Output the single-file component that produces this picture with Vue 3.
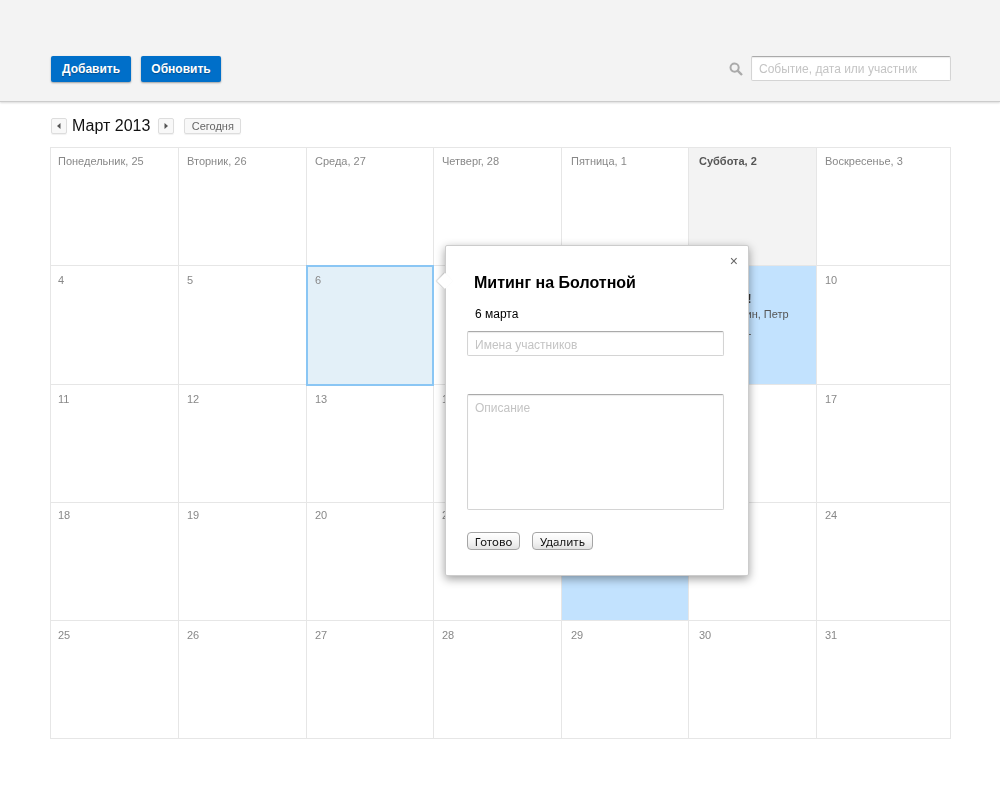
<script setup>
const cells = [
  { label: "Понедельник, 25" },
  { label: "Вторник, 26" },
  { label: "Среда, 27" },
  { label: "Четверг, 28" },
  { label: "Пятница, 1" },
  { label: "Суббота, 2", today: true },
  { label: "Воскресенье, 3" },
  { label: "4" },
  { label: "5" },
  { label: "6", selected: true },
  {},
  {},
  { busy: true, title: "Встреча!", people: "Иван Лукин, Петр", extra: "Анна, Ян -" },
  { label: "10" },
  { label: "11" },
  { label: "12" },
  { label: "13" },
  { label: "14" },
  {},
  {},
  { label: "17" },
  { label: "18" },
  { label: "19" },
  { label: "20" },
  { label: "21" },
  { busy: true },
  {},
  { label: "24" },
  { label: "25" },
  { label: "26" },
  { label: "27" },
  { label: "28" },
  { label: "29" },
  { label: "30" },
  { label: "31" },
];
</script>

<template>
  <div class="page">
    <header class="topbar">
      <div class="actions">
        <button class="primary">Добавить</button>
        <button class="primary">Обновить</button>
      </div>
      <div class="search">
        <svg class="search-icon" width="14" height="14" viewBox="0 0 14 14">
          <circle cx="5.6" cy="5.6" r="4.1" fill="none" stroke="#aaa" stroke-width="2" />
          <path d="M8.6 8.6L13 13" stroke="#aaa" stroke-width="2.4" />
        </svg>
        <input class="field search-field" placeholder="Событие, дата или участник" />
      </div>
    </header>

    <div class="nav">
      <button class="small arrow">
        <svg width="4" height="6" viewBox="0 0 4 6"><path d="M3.5 0v6L0 3z" fill="#555" /></svg>
      </button>
      <span class="month">Март 2013</span>
      <button class="small arrow">
        <svg width="4" height="6" viewBox="0 0 4 6"><path d="M.5 0v6L4 3z" fill="#555" /></svg>
      </button>
      <button class="small today-btn">Сегодня</button>
    </div>

    <div class="wrap">
      <div class="grid">
        <div
          v-for="(cell, i) in cells"
          :key="i"
          :class="['cell', { today: cell.today, selected: cell.selected, busy: cell.busy }]"
        >
          <span class="label">{{ cell.label }}</span>
          <template v-if="cell.title">
            <strong class="event-title">{{ cell.title }}</strong>
            <span class="event-text">{{ cell.people }}</span>
            <span class="event-text">{{ cell.extra }}</span>
          </template>
        </div>
      </div>

      <div class="popup">
        <span class="pointer"></span>
        <span class="close">×</span>
        <h2>Митинг на Болотной</h2>
        <p class="date">6 марта</p>
        <input class="field names" placeholder="Имена участников" />
        <textarea class="field description" placeholder="Описание"></textarea>
        <div class="popup-actions">
          <button class="plain done">Готово</button>
          <button class="plain remove">Удалить</button>
        </div>
      </div>
    </div>
  </div>
</template>

<style scoped>
.page {
  font-family: "Liberation Sans", Arial, sans-serif;
  height: 803px;
  overflow: hidden;
  background: #fff;
}

.topbar {
  box-sizing: border-box;
  height: 102px;
  padding: 56px 49px 0 51px;
  display: flex;
  justify-content: space-between;
  align-items: flex-start;
  background: #f3f3f3;
  border-bottom: 1px solid #ccc;
  box-shadow: 0 1px 2px rgba(0, 0, 0, 0.15);
}

.actions {
  display: flex;
  gap: 10px;
}

.primary {
  width: 80px;
  height: 26px;
  padding: 0;
  border: none;
  border-radius: 2px;
  background: #006fc9;
  color: #fff;
  font: bold 12px "Liberation Sans", Arial, sans-serif;
  box-shadow: 0 1px 2px rgba(0, 0, 0, 0.35);
  text-shadow: 0 1px 1px rgba(0, 0, 0, 0.3);
}

.search {
  display: flex;
  align-items: center;
  gap: 8px;
  will-change: transform;
}

.search-icon {
  margin-top: 1px;
}

.field {
  box-sizing: border-box;
  display: block;
  margin: 0;
  padding: 0 7px;
  border: 1px solid #d4d4d4;
  border-top-color: #aaa;
  border-radius: 2px;
  background: #fff;
  outline: none;
  color: #333;
  box-shadow: inset 0 1px 1px rgba(0, 0, 0, 0.08);
  font: 12px "Liberation Sans", Arial, sans-serif;
}

.field::placeholder {
  color: #c4c4c4;
  opacity: 1;
}

.search-field {
  width: 200px;
  height: 25px;
}

.nav {
  display: flex;
  align-items: center;
  height: 16px;
  margin: 16px 0 13px 51px;
  will-change: transform;
}

.small {
  box-sizing: border-box;
  height: 16px;
  padding: 0;
  border: 1px solid #ddd;
  border-radius: 2px;
  background: #f8f8f8;
  color: #666;
  font: 11px "Liberation Sans", Arial, sans-serif;
  box-shadow: 0 1px 1px rgba(0, 0, 0, 0.06);
}

.arrow {
  width: 16px;
  display: flex;
  align-items: center;
  justify-content: center;
}

.month {
  margin: 0 8px 0 5px;
  font-size: 16px;
  color: #111;
}

.today-btn {
  width: 57px;
  margin-left: 10px;
}

.wrap {
  position: relative;
  margin-left: 50px;
  width: 901px;
}

.grid {
  display: grid;
  grid-template-columns: 128px 128px 127px 128px 127px 128px 134px;
  grid-template-rows: 118px 119px 118px 118px 118px;
  border-top: 1px solid #e6e6e6;
  border-left: 1px solid #e6e6e6;
  width: 900px;
  will-change: transform;
}

.cell {
  box-sizing: border-box;
  display: flex;
  flex-direction: column;
  padding: 7px 7px 0 8px;
  border-right: 1px solid #e6e6e6;
  border-bottom: 1px solid #e6e6e6;
  font-size: 11px;
  color: #888;
}

.label {
  line-height: 13px;
  min-height: 13px;
}

.cell:nth-child(n + 8) {
  padding-top: 8px;
}

.cell:nth-child(n + 22):nth-child(-n + 28) {
  padding-top: 6px;
}

.cell:nth-child(7n + 1) {
  padding-left: 7px;
}

.cell:nth-child(7n + 5) {
  padding-left: 9px;
}

.cell:nth-child(7n + 6) {
  padding-left: 10px;
}

.today {
  background: #f3f3f3;
  color: #555;
  font-weight: bold;
}

.busy {
  background: #c2e2fe;
}

.selected {
  margin: -1px 0 -1px -1px;
  border: 2px solid #8ac6f4;
  background: #e3f0f8;
  z-index: 1;
}

.cell.selected {
  padding: 7px 6px 0 7px;
}

.event-title {
  margin-top: 5px;
  font-size: 12px;
  color: #333;
  line-height: 14px;
}

.event-text {
  color: #555;
  line-height: 17px;
  white-space: nowrap;
}

.event-text + .event-text {
  margin-top: 2px;
}

.popup {
  position: absolute;
  left: 395px;
  top: 98px;
  box-sizing: border-box;
  width: 304px;
  height: 331px;
  padding: 27px 25px 0 21px;
  background: #fff;
  border: 1px solid #ccc;
  border-radius: 2px;
  box-shadow: 0 3px 10px rgba(0, 0, 0, 0.38);
  z-index: 2;
}

.pointer {
  position: absolute;
  left: -9px;
  top: 27px;
  width: 16px;
  height: 16px;
  background: #fff;
  transform: rotate(45deg) scale(0.72);
  box-shadow: -1px 1px 2px rgba(0, 0, 0, 0.2);
  clip-path: polygon(-20% 120%, -20% -20%, 100% 0, 100% 100%);
}

.close {
  position: absolute;
  right: 10px;
  top: 7px;
  font-size: 14px;
  line-height: 16px;
  color: #666;
}

h2 {
  margin: 0 0 0 7px;
  font-size: 16px;
  line-height: 20px;
  color: #000;
}

.date {
  margin: 14px 0 10px 8px;
  font-size: 12px;
  line-height: 14px;
  color: #000;
}

.names {
  width: 257px;
  height: 25px;
  padding-top: 2px;
}

.description {
  width: 257px;
  height: 116px;
  margin-top: 38px;
  padding-top: 6px;
  resize: none;
}

.popup-actions {
  display: flex;
  gap: 12px;
  margin-top: 22px;
}

.plain {
  box-sizing: border-box;
  height: 18px;
  padding: 0;
  border: 1px solid #a5a5a5;
  border-radius: 4px;
  background: linear-gradient(#fff, #f2f2f2 60%, #e2e2e2);
  color: #111;
  font: 11.5px "Noto Sans", sans-serif;
}

.done {
  width: 53px;
}

.remove {
  width: 61px;
}
</style>

<style>
html,
body {
  margin: 0;
  background: #fff;
}
</style>
